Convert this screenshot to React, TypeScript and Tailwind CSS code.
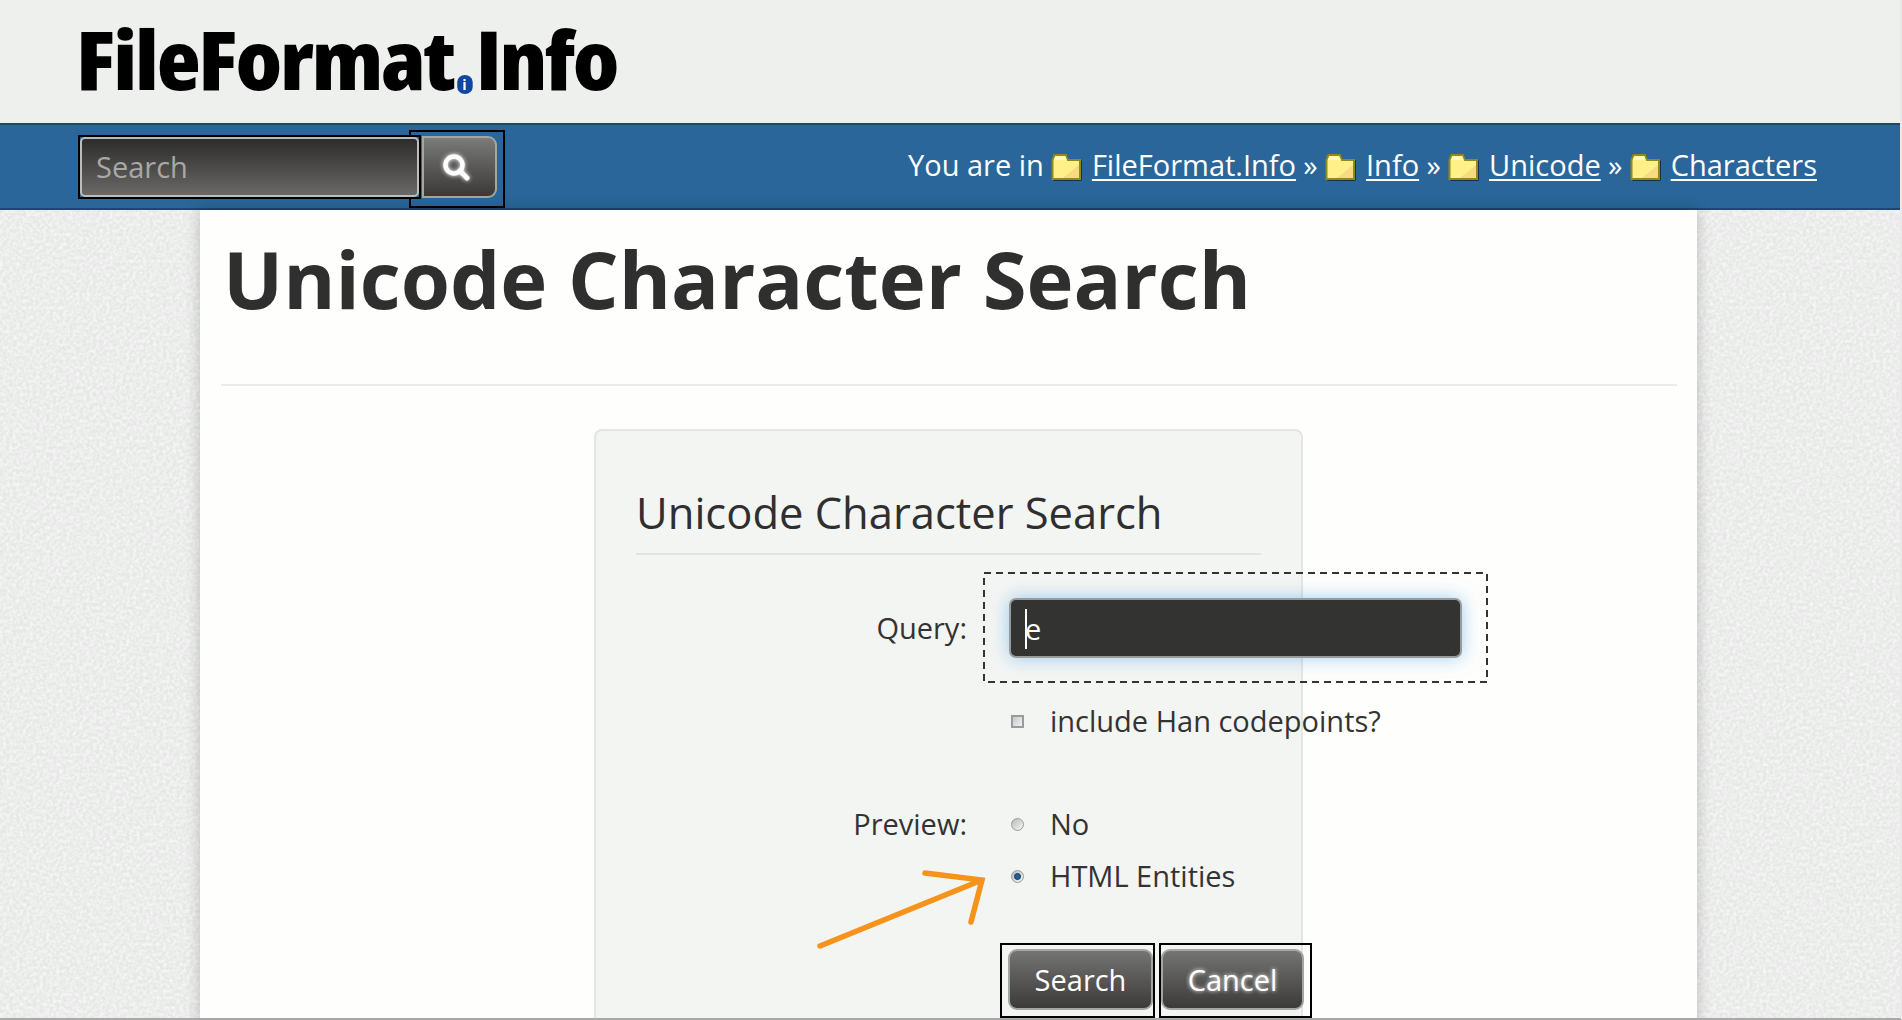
const font = "font-['Open_Sans','Noto_Sans',sans-serif]";

const Folder = () => (
  <svg width="32" height="29" viewBox="0 0 32 29" className="inline-block shrink-0 mt-[5px]">
    <path d="M2.5 7.5 L4.5 2.5 H16 L18 7.5 H30.5 V27.5 H2.5 Z" fill="#000" />
    <path d="M1.5 7 L3.5 2 H15 L17 7 H29 V26 H1.5 Z" fill="#fff08a" stroke="#8d8a1e" strokeWidth="2" />
    <path d="M3 7 L4.5 3.5 H14 L15.5 7 Z" fill="#fff8c0" />
    <path d="M28 12 V25 H12 Z" fill="#f8da80" />
  </svg>
);

const Crumb = ({ label }: { label: string }) => (
  <>
    <Folder />
    <a href="#" className="ml-[9px] underline underline-offset-[3px] decoration-2">
      {label}
    </a>
  </>
);

const Sep = () => <span className="mx-[7.3px]">»</span>;

const Radio = ({ checked }: { checked?: boolean }) => (
  <span className="w-[13px] h-[13px] rounded-full border border-[#9a9c9a] bg-gradient-to-br from-[#bbb] to-[#f5f5f5] flex items-center justify-center shrink-0">
    {checked && <span className="w-[7px] h-[7px] rounded-full bg-[#1f5fa0] border border-[#16365c]" />}
  </span>
);

const FormButton = ({ label, glow }: { label: string; glow?: boolean }) => (
  <button
    className={`w-full h-full rounded-[9px] border-2 border-[#a4a6a2] bg-gradient-to-b from-[#757573] to-[#3c3b39] text-white text-[29px] ${
      glow ? "[text-shadow:0_0_4px_#fff]" : ""
    }`}
  >
    {label}
  </button>
);

export default function App() {
  return (
    <div className={`${font} relative w-[1902px] h-[1020px] overflow-hidden bg-[#e6e8e6] text-[#333] border-r-2 border-b-2 border-r-[#e9e9e9] border-b-[#a8a8a8]`}>
      {/* paper texture behind the page */}
      <svg className="absolute inset-0 w-full h-full">
        <filter id="paper">
          <feTurbulence type="fractalNoise" baseFrequency="0.3" numOctaves="2" />
          <feColorMatrix values="0 0 0 0 1  0 0 0 0 1  0 0 0 0 1  1.3 0 0 0 -0.42" />
        </filter>
        <rect width="100%" height="100%" filter="url(#paper)" />
      </svg>

      <div className="relative flex flex-col h-full">
        <header className="h-[123px] bg-[#eef0ee] pl-[76px] pt-[13px] shrink-0 overflow-visible">
          <div className="flex w-fit items-baseline text-black font-extrabold leading-[90px] text-[82px] [font-stretch:75%] tracking-[-2px] origin-left scale-x-[1.105] whitespace-nowrap">
            <span>FileFormat</span>
            <span className="w-[14px] h-[19px] mx-[3px] rounded-full bg-[#0f47a1] text-white text-[15px] font-bold leading-[19px] text-center tracking-normal">i</span>
            <span>Info</span>
          </div>
        </header>

        <nav className="h-[87px] shrink-0 flex items-start justify-between bg-[#2a6699] border-y-2 border-[#1f4570] pl-[78px] pr-[83px] text-white">
          <div className="flex items-start pt-[5px]">
            <div className="relative z-10 mt-[5px] w-[343px] h-[64px] border-2 border-black">
              <input
                placeholder="Search"
                className="w-full h-full rounded-[5px] border-2 border-[#bcbcbc] bg-gradient-to-b from-[#2d2d2b] to-[#6b6967] pl-[14px] pb-[2px] text-[29px] placeholder:text-[#a8a8a6] outline-none"
              />
            </div>
            <div className="-ml-[12px] w-[96px] h-[78px] border-2 border-black pt-[4px] pl-[11px]">
              <button className="w-[75px] h-[62px] rounded-r-[9px] border-2 border-[#a4a6a2] bg-gradient-to-b from-[#7b7b79] to-[#3a3937] flex items-center justify-center pr-[8px]">
                <svg width="32" height="32" viewBox="0 0 32 32" fill="none" stroke="#fff" strokeLinecap="round" className="drop-shadow-[0_0_2px_#fff]">
                  <circle cx="14" cy="14" r="8.5" strokeWidth="4.5" />
                  <path d="M20 20 L27 27" strokeWidth="5" />
                </svg>
              </button>
            </div>
          </div>
          <div className="flex items-center h-full text-[29px] pb-[3px] whitespace-nowrap">
            <span className="mr-[7px]">You are in</span>
            <Crumb label="FileFormat.Info" />
            <Sep />
            <Crumb label="Info" />
            <Sep />
            <Crumb label="Unicode" />
            <Sep />
            <Crumb label="Characters" />
          </div>
        </nav>

        <main className="w-[1497px] ml-[200px] flex-1 bg-[#fefefc] pl-[21px] pr-[20px] shadow-[0_0_14px_rgba(0,0,0,0.22)]">
          <h1 className="text-[79.6px] font-bold leading-[108px] text-[#2f2f2f] pl-[2px] pt-[14px] h-[176px] border-b-2 border-[#eaecea]">
            Unicode Character Search
          </h1>

          <form className="relative ml-[373px] mt-[43px] w-[709px] h-[700px] rounded-t-[8px] border-2 border-[#e4e6e4] bg-[#f3f5f3] pl-[41px] pt-[50px]">
            <h2 className="-ml-[1px] w-[625px] h-[74px] border-b-2 border-[#e2e4e2] text-[43.5px] leading-[64px] text-[#2f2f2f]">
              Unicode Character Search
            </h2>

            <div className="flex items-center mt-[17px]">
              <label className="w-[330px] text-right text-[29px] shrink-0">Query:</label>
              <div className="relative ml-[16px] w-[505px] h-[111px] shrink-0 pl-[26px] pt-[26px]">
                <svg className="absolute inset-0" width="505" height="111" fill="none">
                  <rect x="1" y="1" width="503" height="109" stroke="#333" strokeWidth="2" strokeDasharray="7 5" />
                </svg>
                <div className="relative w-[453px] h-[60px] rounded-[7px] border-2 border-[#9a9a98] bg-[#333331] shadow-[0_0_18px_rgba(82,168,236,0.55)]">
                  <input
                    readOnly
                    value="e"
                    className="w-full h-full bg-transparent pl-[14px] text-white text-[29px] outline-none"
                  />
                  <span className="absolute left-[14px] top-[9px] w-[2px] h-[40px] bg-white" />
                </div>
              </div>
            </div>

            <div className="flex items-center ml-[374px] mt-[18px] h-[40px] text-[29px] whitespace-nowrap">
              <span className="w-[13px] h-[13px] border-2 border-[#9a9c9a] bg-gradient-to-br from-[#c4c8cc] to-[#f3f3f3] shrink-0" />
              <span className="ml-[26px]">include Han codepoints?</span>
            </div>

            <div className="flex items-center mt-[63px] h-[40px] text-[29px]">
              <label className="w-[330px] text-right shrink-0">Preview:</label>
              <span className="ml-[44px]"><Radio /></span>
              <span className="ml-[26px]">No</span>
            </div>

            <div className="flex items-center ml-[374px] mt-[12px] h-[40px] text-[29px]">
              <Radio checked />
              <span className="ml-[26px]">HTML Entities</span>
            </div>

            <div className="flex items-start ml-[363px] mt-[47px] w-[320px]">
              <div className="w-[155px] h-[75px] border-2 border-black pl-[6px] pt-[4px] pb-[6px] shrink-0">
                <FormButton label="Search" />
              </div>
              <div className="ml-[4px] w-[153px] h-[75px] border-2 border-black pr-[6px] pt-[4px] pb-[6px] shrink-0">
                <FormButton label="Cancel" glow />
              </div>
            </div>
          </form>
        </main>
      </div>

      {/* hand-drawn arrow pointing at the selected radio */}
      <svg className="absolute left-0 top-0 pointer-events-none" width="1902" height="1020" fill="none" stroke="#f7931a" strokeWidth="5.5" strokeLinecap="round">
        <path d="M820 946 L982 880 M925 873 L982 880 L971 922" />
      </svg>
    </div>
  );
}
